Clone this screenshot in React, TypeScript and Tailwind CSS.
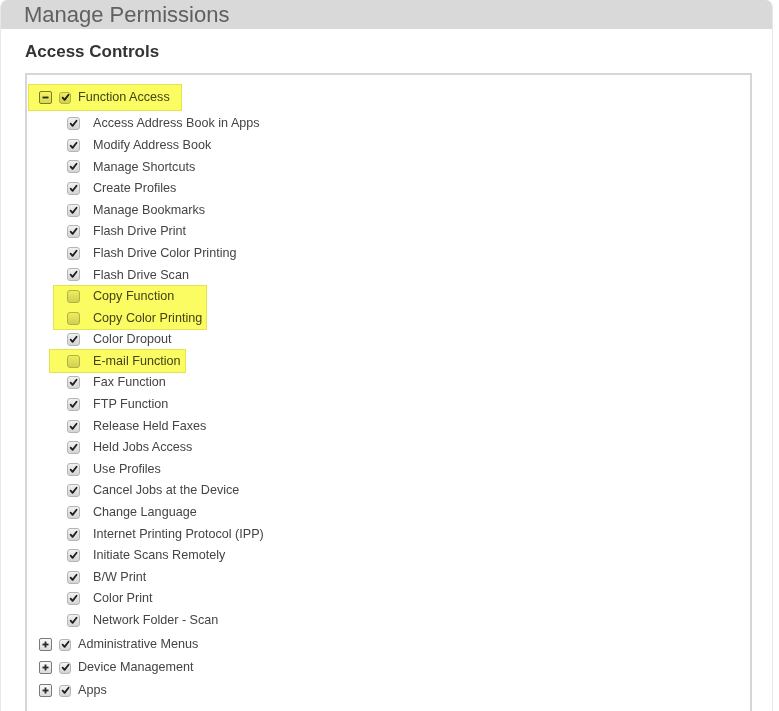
import React from "react";

const functionItems: { label: string; checked: boolean }[] = [
  { label: "Access Address Book in Apps", checked: true },
  { label: "Modify Address Book", checked: true },
  { label: "Manage Shortcuts", checked: true },
  { label: "Create Profiles", checked: true },
  { label: "Manage Bookmarks", checked: true },
  { label: "Flash Drive Print", checked: true },
  { label: "Flash Drive Color Printing", checked: true },
  { label: "Flash Drive Scan", checked: true },
  { label: "Copy Function", checked: false },
  { label: "Copy Color Printing", checked: false },
  { label: "Color Dropout", checked: true },
  { label: "E-mail Function", checked: false },
  { label: "Fax Function", checked: true },
  { label: "FTP Function", checked: true },
  { label: "Release Held Faxes", checked: true },
  { label: "Held Jobs Access", checked: true },
  { label: "Use Profiles", checked: true },
  { label: "Cancel Jobs at the Device", checked: true },
  { label: "Change Language", checked: true },
  { label: "Internet Printing Protocol (IPP)", checked: true },
  { label: "Initiate Scans Remotely", checked: true },
  { label: "B/W Print", checked: true },
  { label: "Color Print", checked: true },
  { label: "Network Folder - Scan", checked: true },
];

function CheckBox({ checked, size }: { checked: boolean; size: "sm" | "md" }) {
  const box = size === "sm" ? "w-[12px] h-[12px]" : "w-[13px] h-[13px]";
  return (
    <span
      className={`${box} shrink-0 rounded-[3px] border border-[#b4b4b4] bg-gradient-to-b from-[#f2f2f2] to-[#d4d4d4] flex items-center justify-center`}
    >
      {checked && (
        <svg viewBox="0 0 10 10" className="w-[9px] h-[9px]">
          <path d="M1.8 5.2 L4 7.6 L8.4 2" fill="none" stroke="#1e1e1e" strokeWidth="2" strokeLinecap="round" strokeLinejoin="round" />
        </svg>
      )}
    </span>
  );
}

function ToggleBox({ open }: { open: boolean }) {
  return (
    <span className="w-[13px] h-[13px] shrink-0 rounded-[2px] border border-[#7a7a7a] bg-gradient-to-b from-[#fafafa] to-[#dcdcdc] flex items-center justify-center">
      <svg viewBox="0 0 9 9" className="w-[9px] h-[9px]">
        <rect x="1.5" y="3.6" width="6" height="1.8" fill="#2a2a2a" />
        {!open && <rect x="3.6" y="1.5" width="1.8" height="6" fill="#2a2a2a" />}
      </svg>
    </span>
  );
}

function Mark({ className }: { className: string }) {
  return (
    <span
      className={`absolute pointer-events-none mix-blend-multiply bg-[#fbfb62] border border-[#e4e450] ${className}`}
    />
  );
}

function TopRow({ label, open, children }: { label: string; open: boolean; children?: React.ReactNode }) {
  return (
    <div className="relative h-[23px] flex items-center pl-[12px]">
      <ToggleBox open={open} />
      <span className="ml-[7px]">
        <CheckBox checked size="sm" />
      </span>
      <span className="ml-[7px] text-[12.6px] text-[#444]">{label}</span>
      {children}
    </div>
  );
}

function ChildRow({ label, checked }: { label: string; checked: boolean }) {
  return (
    <div className="h-[21.6px] flex items-center pl-[40px]">
      <CheckBox checked={checked} size="md" />
      <span className="ml-[13px] text-[12.6px] text-[#444]">{label}</span>
    </div>
  );
}

export default function App() {
  const before = functionItems.slice(0, 8);
  const copyPair = functionItems.slice(8, 10);
  const dropout = functionItems[10];
  const email = functionItems[11];
  const after = functionItems.slice(12);

  return (
    <div className="min-h-screen bg-white" style={{ fontFamily: '"Liberation Sans", Arial, sans-serif' }}>
      <div className="w-[773px] rounded-t-[7px] border-x border-[#e8e8e8] overflow-hidden">
        <div className="h-[29px] bg-[#d9d9d9] pl-[23px] text-[22px] leading-[29px] text-[#606060]">
          Manage Permissions
        </div>
        <div className="pt-[13px]">
          <h2 className="pl-[24px] text-[17px] leading-[20px] font-bold text-[#333]">Access Controls</h2>
          <div className="mt-[11px] ml-[24px] mr-[20px] border-2 border-b-0 border-[#d6d6d6] pt-[11px] pb-[40px]">
            <TopRow label="Function Access" open>
              <Mark className="left-[1px] -top-[2px] w-[154px] h-[27px]" />
            </TopRow>
            <div className="mt-[4px]">
              {before.map((it) => (
                <ChildRow key={it.label} {...it} />
              ))}
              <div className="relative">
                {copyPair.map((it) => (
                  <ChildRow key={it.label} {...it} />
                ))}
                <Mark className="left-[26px] -top-[1px] w-[154px] h-[45px]" />
              </div>
              <ChildRow {...dropout} />
              <div className="relative">
                <ChildRow {...email} />
                <Mark className="left-[22px] -top-[2px] w-[137px] h-[24px]" />
              </div>
              {after.map((it) => (
                <ChildRow key={it.label} {...it} />
              ))}
            </div>
            <div className="mt-[2px]">
              <TopRow label="Administrative Menus" open={false} />
              <TopRow label="Device Management" open={false} />
              <TopRow label="Apps" open={false} />
            </div>
          </div>
        </div>
      </div>
    </div>
  );
}
